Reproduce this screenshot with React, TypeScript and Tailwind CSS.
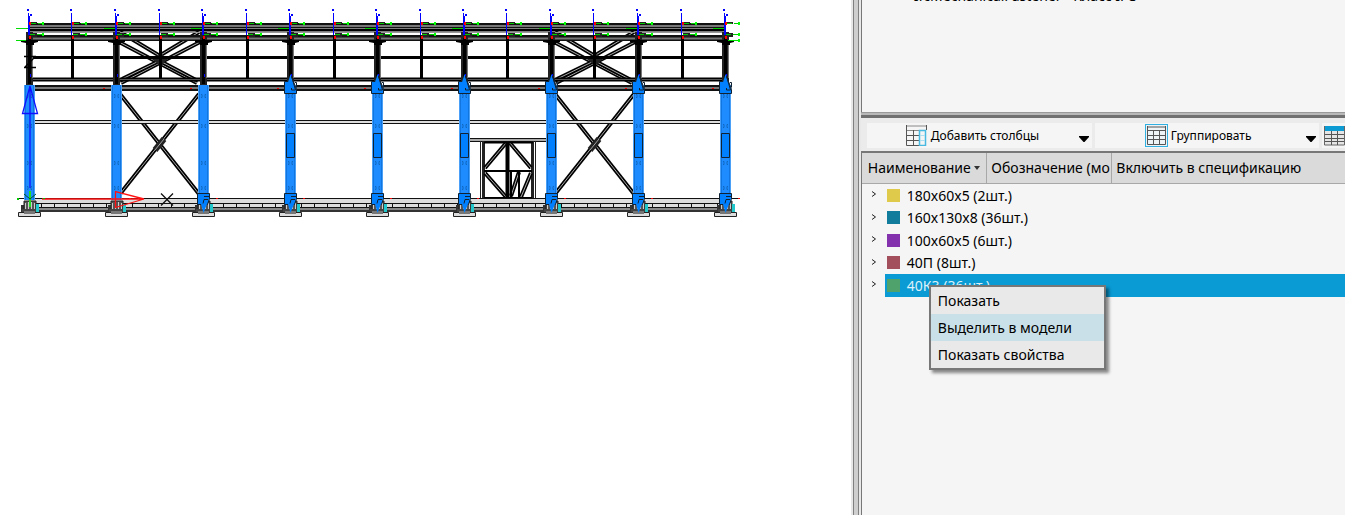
import React from "react";

const columns = [29, 116, 203, 290, 377, 464, 551, 638, 725];
const midPosts = [72, 160, 247, 334, 421, 507, 594, 682];
const beamTicks = Array.from({ length: 53 }, (_, i) => 41 + i * 13);

const rows = [
  { label: "180x60x5 (2шт.)", color: "bg-[#e0ca4c]" },
  { label: "160x130x8 (36шт.)", color: "bg-[#127c9c]" },
  { label: "100x60x5 (6шт.)", color: "bg-[#8431ae]" },
  { label: "40П (8шт.)", color: "bg-[#a4505c]" },
  { label: "40К3 (36шт.)", color: "bg-[#50a26c]", selected: true },
];

const menuItems = ["Показать", "Выделить в модели", "Показать свойства"];

// double steel profile drawn as black outline with a grey core
function Bar({ x1, y1, x2, y2, w = 4 }: { x1: number; y1: number; x2: number; y2: number; w?: number }) {
  return (
    <g>
      <line x1={x1} y1={y1} x2={x2} y2={y2} stroke="#000" strokeWidth={w} />
      <line x1={x1} y1={y1} x2={x2} y2={y2} stroke="#aaa" strokeWidth={w - 3} />
    </g>
  );
}

function Brace({ x }: { x: number }) {
  return (
    <g>
      <Bar x1={x + 4} y1={94} x2={x + 83} y2={194} />
      <Bar x1={x + 83} y1={94} x2={x + 4} y2={194} />
      <path d={`M${x + 39} 150L${x + 48} 139`} stroke="#222" strokeWidth={6} />
      <path d={`M${x + 39} 150L${x + 48} 139`} stroke="#a3a3a3" strokeWidth={1} />
      <Bar x1={x + 3} y1={42} x2={x + 81} y2={83} />
      <Bar x1={x + 84} y1={42} x2={x + 5} y2={83} />
      <Bar x1={x + 4} y1={32} x2={x + 44} y2={56} />
      <Bar x1={x + 83} y1={32} x2={x + 43} y2={56} />
      <Bar x1={x + 44} y1={61} x2={x + 80} y2={80} />
      <Bar x1={x + 43} y1={61} x2={x + 6} y2={79} />
      <path d={`M${x + 36} 59L${x + 44} 53L${x + 52} 59L${x + 44} 66Z`} fill="#222" />
    </g>
  );
}

function Post({ x, main }: { x: number; main: boolean }) {
  return (
    <g>
      <rect x={x - 1} y={36} width={3} height={42} fill="#000" />
      {main && (
        <g>
          <rect x={x - 3} y={32} width={7} height={53} fill="#222" />
          <rect x={x - 1} y={38} width={3} height={46} fill="#000" />
          <rect x={x + 3} y={42} width={1} height={36} fill="#777" />
          <path d={`M${x - 8} 40h17v2l-4 1v2h-8v-2l-5 -1z`} fill="#000" />
        </g>
      )}
      <path d={`M${x + 1} 22h7v2h-7zM${x + 1} 33h7v4h-7z`} fill="#222" />
      <path d={`M${x + 2} 23.5H${x + 14}M${x + 1} 34.5H${x + 14}`} stroke="#0c0" strokeDasharray="5 2" />
      <path d={`M${x + 13} 22h2v3h-2zM${x + 13} 33h2v3h-2z`} fill="#0f0" />
      {main && <path d={`M${x - 12} 28.5h11`} stroke="#0c0" />}
      <rect x={x - 1} y={13} width={1} height={22} fill="#00f" />
      <rect x={x - 2} y={9} width={2} height={2} fill="#00f" />
      {main && <path d={`M${x + 1} 14h2v2h-2zM${x} 16h1v19h-1zM${x + 1} 74h1v3h-1z`} fill="#00f" />}
      <path d={`M${x} 22h2v3h-2zM${x} 36h2v3h-2z`} fill="#f00" />
    </g>
  );
}

function Column({ x, index }: { x: number; index: number }) {
  const marks = [94, 124, 161, 186];
  return (
    <g>
      <path d={`M${x - 8} 205h15v8h-15z`} fill="#333" />
      <path d={`M${x - 5} 201h12v9h-12z`} fill="#555" stroke="#222" />
      <path d={`M${x - 3.5} 203v8M${x - 0.5} 202v9M${x + 2.5} 202v9M${x + 5.5} 203v8`} stroke="#ccc" />
      <rect x={x - 7} y={209} width={15} height={3} fill="#444" />
      <rect x={x + 7} y={204} width={3} height={8} fill="#22c7cc" />
      <path d={`M${x - 10.5} 212.5h22v4h-22z`} fill="#ddd" stroke="#222" />
      <path d={`M${x - 5} 212.5h11`} stroke="#777" strokeWidth={3} />
      <rect x={x - 5} y={85} width={11} height={115} fill="#4aa0f7" />
      <rect x={x - 4} y={85} width={9} height={115} fill="#1176e0" />
      <rect x={x - 3} y={85} width={2} height={115} fill="#1e8cff" />
      <rect x={x + 2} y={85} width={2} height={115} fill="#1e8cff" />
      <rect x={x - 1} y={85} width={3} height={115} fill="#1e8cff" />
      {marks.map((y) => (
        <path key={y} d={`M${x - 2} ${y + 0.5}h1v3h-1M${x + 3} ${y + 0.5}h-1v3h1`} fill="none" stroke="#1168c0" />
      ))}
      {index > 2 && (
        <g fill="#0080ff" stroke="#123">
          <path d={`M${x - 5.5} 81.5h9l3 8v4h-12z`} />
          <path d={`M${x + 0.5} 74L${x - 2.5} 84H${x + 3.5}Z`} stroke="none" />
          <path d={`M${x + 1.5} 76l4 14h-4v-2M${x + 5} 82.5h1.500v5`} fill="none" />
          <path d={`M${x - 3.5} 133.5h8v24h-8z`} />
        </g>
      )}
      {index > 1 && (
        <g fill="#0080ff" stroke="#123">
          <path d={`M${x - 5.5} 193.5h12v5l-2 6h-10z`} />
          <path d={`M${x - 2} 204L${x + 0.5} 213L${x + 4} 204Z`} stroke="none" />
          <path d={`M${x + 6} 196.5h-5M${x + 5} 199.5h-4l-1 4`} fill="none" />
        </g>
      )}
    </g>
  );
}

function Gate() {
  return (
    <g>
      <rect x={468.5} y={138.5} width={79} height={3} fill="#aaa" stroke="#111" />
      <path d="M480.5 141v58M535.5 141v58" stroke="#222" />
      <path d="M483.5 141v58M532.5 141v58" stroke="#222" strokeWidth={3} />
      <Bar x1={485} y1={168} x2={506} y2={143} />
      <Bar x1={510} y1={143} x2={531} y2={168} />
      <Bar x1={485} y1={173} x2={506} y2={197} />
      <Bar x1={531} y1={173} x2={521} y2={197} />
      <Bar x1={511} y1={196} x2={519} y2={172} />
      <path d="M484 142.5h49M484 171h48M484 198h48" stroke="#000" strokeWidth={2} />
      <path d="M507.5 142v56" stroke="#000" strokeWidth={4} />
      <path d="M519 171v27M511 171v27" stroke="#000" strokeWidth={2} />
    </g>
  );
}

function Building() {
  return (
    <svg width="760" height="230" viewBox="0 0 760 230" className="block max-w-none" role="img" aria-label="Каркас здания">
      <g>
        <Brace x={116} />
        <Brace x={551} />
        <path d="M28 23h697v5H28zM28 35h697v6H28z" fill="#111" />
        <path d="M28 26h697M28 38.5h697" stroke="#777" strokeWidth={2} />
        <path d="M28 30h697M28 57.5h697" stroke="#000" strokeWidth={3} />
        <path d="M28 32.5h697" stroke="#999" />
        <path d="M28 79.5h697" stroke="#000" strokeWidth={4} />
        <path d="M28 79.5h697" stroke="#555" />
        <path d="M28 88h697" stroke="#111" strokeWidth={6} />
        <path d="M28 88h697" stroke="#777" strokeWidth={2} />
        <path d="M34 120.5h691v3H34z" fill="#ddd" stroke="#111" />
        <Gate />
        <rect x={28} y={199} width={700} height={9} fill="#ddd" />
        <path d="M18 198.5h720M36 203.5h690M36 207.5h690" stroke="#111" />
        {beamTicks.map((x) => (
          <path key={x} d={`M${x + 0.5} 203v5`} stroke="#111" />
        ))}
        <path d="M36 209h690" stroke="#888" strokeWidth={2} />
        <path d="M36 211h690" stroke="#333" strokeWidth={2} />
      </g>
      {midPosts.map((x) => (
        <Post key={x} x={x} main={false} />
      ))}
      {columns.map((x) => (
        <Post key={x} x={x} main />
      ))}
      {columns.map((x, i) => (
        <Column key={x} x={x} index={i} />
      ))}
      {columns.slice(1).map((x) => (
        <path key={x} d={`M${x - 13} 88h2v1h-2zM${x + 13} 198h2v1h-2z`} fill="#e00" />
      ))}
      {/* axes */}
      <path d="M24 56.5h12M24 67.5h12M35 57L25 67" stroke="#000" strokeWidth={1.3} fill="none" />
      <path d="M16 28.5h10M16 40.5h10M728 40.5h12" stroke="#0d0" />
      <path d="M738 39h2v3h-2z" fill="#0f0" />
      <path d="M30 188V86L22.5 113.5H37.5L30 86" stroke="#1010ff" fill="none" strokeWidth={1.3} />
      <path d="M30 191v16" stroke="#2d2" strokeWidth={2} />
      <path d="M24 194L30 199L36 194" stroke="#052" fill="none" />
      <path d="M42 199H144L115.5 191.5V207.5L144 199" stroke="#f11" fill="none" strokeWidth={1.3} />
      <path d="M161 193.5L173 205.5M173 193.5L161 205.5" stroke="#111" strokeWidth={1.3} />
      <path d="M17 198h2v2h-2zM43 198h2v1h-2z" fill="#0c0" />
    </svg>
  );
}

function AddColumnsIcon() {
  return (
    <svg width="21" height="21" viewBox="0 0 21 21" fill="none" aria-hidden="true">
      <path d="M0.5 1h20M1 5.5h19" stroke="#888" />
      <path d="M0.5 0v20.5H13M1 10.5h12M1 15.5h12M7.5 5v15M20.5 0v5" stroke="#555" />
      <path d="M13.5 5.5v15h6v-15z" stroke="#48b9e0" strokeWidth={1.5} />
      <path d="M14 10.5h5M14 15.5h5" stroke="#aedff0" />
    </svg>
  );
}

function GroupIcon() {
  return (
    <svg width="23" height="23" viewBox="0 0 23 23" fill="none" aria-hidden="true">
      <rect x="0.5" y="0.5" width="22" height="22" fill="#eef3f5" stroke="#30b0e0" />
      <path d="M2 3h19M2 6.5h19M2.5 2v18.5h18V2M2 11.5h19M2 15.5h19M8.5 7v14M14.5 7v14" stroke="#555" />
    </svg>
  );
}

function TableIcon() {
  return (
    <svg width="21" height="21" viewBox="0 0 21 21" fill="none" className="shrink-0" aria-hidden="true">
      <path d="M0.5 1v19h20v-19" fill="#e5e5e5" stroke="#666" />
      <path d="M1 1h19v5H1z" fill="#0d9bd3" />
      <path d="M1 9.5h19M1 13.5h19M1 16.5h19M7.5 6v14M13.5 6v14" stroke="#555" />
    </svg>
  );
}

function Caret() {
  return (
    <svg width="10" height="6" viewBox="0 0 10 6" className="mt-1.5 shrink-0" aria-hidden="true">
      <path d="M0 0h10v1L5.5 6h-1L0 1z" fill="#000" />
    </svg>
  );
}

function Toolbar() {
  return (
    <div className="flex h-[33px] shrink-0 gap-[3px] overflow-hidden bg-[#ebebeb] pt-[5px] pb-[3px] pl-1.5 text-[12px]">
      <button className="flex w-[225px] shrink-0 items-center bg-[#f5f5f5] pr-[3px] pl-[39px]">
        <AddColumnsIcon />
        <span className="ml-1 flex-1 text-left whitespace-nowrap">Добавить столбцы</span>
        <Caret />
      </button>
      <button className="flex w-[224px] shrink-0 items-center bg-[#f5f5f5] pr-[3px] pl-[50px]">
        <GroupIcon />
        <span className="ml-[3px] flex-1 text-left whitespace-nowrap">Группировать</span>
        <Caret />
      </button>
      <button className="flex flex-1 items-center bg-[#f5f5f5] pl-0.5" aria-label="Таблица">
        <TableIcon />
      </button>
    </div>
  );
}

function SpecTable() {
  return (
    <table className="w-full table-fixed border-collapse text-left text-[14px]">
      <thead>
        <tr className="h-[30px] border-b border-[#a8a8a8] bg-[#dadada]">
          <th className="w-[125px] overflow-hidden border-r border-[#a8a8a8] p-0 pl-1.5 font-normal whitespace-nowrap">
            <span className="flex items-center gap-[3px]">
              Наименование
              <svg width="6" height="4" viewBox="0 0 6 4" className="shrink-0" aria-hidden="true">
                <path d="M0 0h6L3 4z" fill="#333" />
              </svg>
            </span>
          </th>
          <th className="w-[125px] overflow-hidden border-r border-[#a8a8a8] p-0 pl-1 font-normal whitespace-nowrap">
            Обозначение (мо
          </th>
          <th className="p-0 pl-1 font-normal whitespace-nowrap">Включить в спецификацию</th>
        </tr>
      </thead>
      <tbody>
        {rows.map((row) => (
          <tr key={row.label} className="h-[22px] odd:h-[23px]">
            <td colSpan={3} className="h-[inherit] p-0">
              <div className="flex h-[inherit] items-center">
                <button className="flex w-[23px] shrink-0 pb-0.5 pl-[9px]" aria-label="Развернуть">
                  <svg width="6" height="6" viewBox="0 0 6 6" fill="none" aria-hidden="true">
                    <path d="M1 0.5L4.5 3L1 5.5" stroke="#222" />
                  </svg>
                </button>
                <span
                  className={
                    row.selected
                      ? "flex h-[inherit] flex-1 items-center gap-[7px] bg-[#0a9bd4] pl-0.5 text-[#dcf1fa]"
                      : "flex h-[inherit] flex-1 items-center gap-[7px] pl-0.5"
                  }
                >
                  <span className={`size-[13px] ${row.color}`} />
                  {row.label}
                </span>
              </div>
            </td>
          </tr>
        ))}
      </tbody>
    </table>
  );
}

function ContextMenu() {
  return (
    <div
      role="menu"
      className="absolute top-[132px] left-[67px] flex w-[177px] flex-col border-2 border-[#777] bg-[#e9e9e9] text-[14px] shadow-[3px_3px_3px_rgba(0,0,0,0.45)]"
    >
      {menuItems.map((item, i) => (
        <button
          key={item}
          role="menuitem"
          className={i === 1 ? "h-[27px] bg-[#c9e0e8] pl-[7px] text-left" : "h-[27px] pl-[7px] text-left"}
        >
          {item}
        </button>
      ))}
    </div>
  );
}

export default function App() {
  return (
    <div className="flex h-screen overflow-hidden bg-white font-['Noto_Sans',sans-serif] text-black">
      <main className="min-w-0 flex-1 overflow-hidden">
        <Building />
      </main>

      <div className="flex w-2.5 shrink-0 border-l-2 border-[#e8e8e8] bg-[#e8e8e8]">
        <div className="w-1.5 border-x border-[#808080] bg-[#cfcfcf]" />
      </div>

      <aside className="flex w-[36%] shrink-0 flex-col bg-[#f5f5f5]">
        <div className="flex h-[112px] shrink-0 flex-col overflow-hidden border-l border-[#777] pl-[52px] text-[14px]">
          <p className="-mt-3.5 leading-5 whitespace-nowrap">IfcMechanicalFastener - Класс IFC</p>
        </div>
        <div className="h-1.5 shrink-0 border-t border-b-3 border-t-[#999] border-b-[#707070] bg-[#b8b8b8]" />
        <Toolbar />
        <div className="relative flex-1 border-t-2 border-l border-t-[#777] border-l-[#777]">
          <SpecTable />
          <ContextMenu />
        </div>
      </aside>
    </div>
  );
}
